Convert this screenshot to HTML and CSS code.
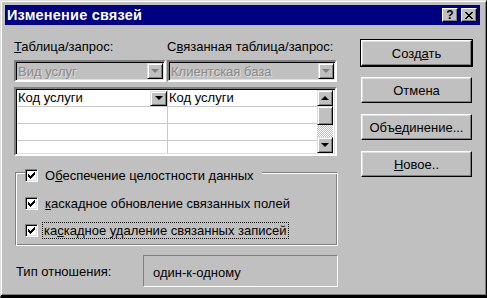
FILE: index.html
```html
<!DOCTYPE html>
<html lang="ru">
<head>
<meta charset="utf-8">
<title>Изменение связей</title>
<link rel="stylesheet" href="styles.css">
</head>
<body>
<div class="window">
  <div class="titlebar">
    <span class="title">Изменение связей</span>
    <div class="tbtns">
      <span class="tbtn help">?</span>
      <span class="tbtn close">
        <svg width="8" height="7" viewBox="0 0 8 7"><path d="M0 0h2v1h1v1h2v-1h1v-1h2v1h-1v1h-1v1h-1v1h1v1h1v1h1v1h-2v-1h-1v-1h-2v1h-1v1h-2v-1h1v-1h1v-1h1v-1h-1v-1h-1v-1h-1z" fill="#000"/></svg>
      </span>
    </div>
  </div>
  <div class="content">
    <div class="left">
      <div class="labels">
        <span class="lab lab1"><u>Т</u>аблица/запрос:</span>
        <span class="lab lab2">С<u>в</u>язанная таблица/запрос:</span>
      </div>
      <div class="combos">
        <div class="combo c1"><span class="ctext">Вид услуг</span><span class="arrowbtn dis"><i class="tri"></i></span></div>
        <div class="combo c2"><span class="ctext">Клиентская база</span><span class="arrowbtn dis"><i class="tri"></i></span></div>
      </div>
      <div class="grid">
        <div class="cols">
          <div class="col col1">
            <div class="cell first">Код услуги<span class="cellbtn"><i class="tri"></i></span></div>
            <div class="cell"></div>
            <div class="cell"></div>
            <div class="cell last"></div>
          </div>
          <div class="col col2">
            <div class="cell">Код услуги</div>
            <div class="cell"></div>
            <div class="cell"></div>
            <div class="cell last"></div>
          </div>
        </div>
        <div class="scroll">
          <span class="sbtn"><i class="tri up"></i></span>
          <span class="thumb"></span>
          <span class="track"></span>
          <span class="sbtn"><i class="tri"></i></span>
        </div>
      </div>
      <div class="group">
        <div class="gtitle">
          <span class="chk"><svg width="7" height="7" viewBox="0 0 7 7"><path d="M0 2h1v1h1v1h1v-1h1v-1h1v-1h1v-1h1v3h-1v1h-1v1h-1v1h-1v1h-1v-1h-1v-1h-1z" fill="#000"/></svg></span>
          <span class="ctxt">О<u>б</u>еспечение целостности данных</span>
        </div>
        <div class="crow">
          <span class="chk"><svg width="7" height="7" viewBox="0 0 7 7"><path d="M0 2h1v1h1v1h1v-1h1v-1h1v-1h1v-1h1v3h-1v1h-1v1h-1v1h-1v1h-1v-1h-1v-1h-1z" fill="#000"/></svg></span>
          <span class="ctxt"><u>к</u>аскадное обновление связанных полей</span>
        </div>
        <div class="crow">
          <span class="chk"><svg width="7" height="7" viewBox="0 0 7 7"><path d="M0 2h1v1h1v1h1v-1h1v-1h1v-1h1v-1h1v3h-1v1h-1v1h-1v1h-1v1h-1v-1h-1v-1h-1z" fill="#000"/></svg></span>
          <span class="ctxt focus">ка<u>с</u>кадное удаление связанных записей</span>
        </div>
      </div>
      <div class="rel">
        <span class="rlab">Тип отношения:</span>
        <span class="rbox">один-к-одному</span>
      </div>
    </div>
    <div class="right">
      <button class="btn def">Созд<u>а</u>ть</button>
      <button class="btn">Отмена</button>
      <button class="btn">Объ<u>е</u>динение...</button>
      <button class="btn"><u>Н</u>овое..</button>
    </div>
  </div>
</div>
</body>
</html>
```
FILE: styles.css
```css
html, body {
  margin: 0;
  padding: 0;
  background: #c0c0c0;
}
.window {
  width: 487px;
  height: 298px;
  box-sizing: border-box;
  background: #c0c0c0;
  border-style: solid;
  border-width: 1px 1px 3px 1px;
  border-color: #dfdfdf #000 #000 #dfdfdf;
  box-shadow: inset 1px 1px #fff, inset -1px -1px #808080;
  padding: 4px 6px 0 4px;
  font-family: "Liberation Sans", Arial, sans-serif;
  font-size: 13px;
  color: #000;
  display: flex;
  flex-direction: column;
}
.titlebar {
  height: 20px;
  background: #000080;
  display: flex;
  align-items: center;
  justify-content: space-between;
  padding-left: 2px;
}
.title {
  color: #fff;
  font-weight: bold;
  font-size: 14.5px;
  letter-spacing: 0.2px;
}
.tbtns {
  display: flex;
  gap: 3px;
  padding-right: 3px;
}
.tbtn {
  width: 16px;
  height: 14px;
  box-sizing: border-box;
  background: #c0c0c0;
  border: 1px solid;
  border-color: #fff #000 #000 #fff;
  box-shadow: inset -1px -1px #808080;
  display: flex;
  align-items: center;
  justify-content: center;
  font-weight: bold;
  font-size: 12px;
  line-height: 12px;
}
.content {
  display: flex;
  padding-left: 9px;
  gap: 22px;
}
.left {
  width: 325px;
  display: flex;
  flex-direction: column;
}
.labels {
  display: flex;
  margin-top: 14px;
  height: 15px;
  line-height: 15px;
}
.lab1 { width: 153px; }
.combos {
  display: flex;
  margin-top: 6px;
  gap: 1px;
}
.combo {
  height: 22px;
  box-sizing: border-box;
  border: 2px solid;
  border-color: #808080 #fff #fff #808080;
  box-shadow: inset 1px 1px #000, inset -1px -1px #dfdfdf;
  background: #c0c0c0;
  display: flex;
  align-items: center;
  justify-content: space-between;
  padding: 0 1px 0 2px;
}
.c1 { width: 152px; }
.c2 { width: 170px; }
.ctext {
  color: #8a8a8a;
  text-shadow: 1px 1px #dfdfdf;
}
.arrowbtn {
  width: 16px;
  height: 16px;
  box-sizing: border-box;
  border: 1px solid;
  border-color: #dfdfdf #000 #000 #dfdfdf;
  box-shadow: inset 1px 1px #fff, inset -1px -1px #808080;
  background: #c0c0c0;
  display: flex;
  align-items: center;
  justify-content: center;
}
.tri {
  width: 0;
  height: 0;
  border-left: 4px solid transparent;
  border-right: 4px solid transparent;
  border-top: 4px solid #000;
}
.tri.up {
  border-top: 0;
  border-bottom: 4px solid #000;
}
.dis .tri {
  border-top-color: #808080;
}
.grid {
  margin-top: 5px;
  width: 323px;
  height: 69px;
  box-sizing: border-box;
  border: 2px solid;
  border-color: #808080 #fff #fff #808080;
  box-shadow: inset 1px 1px #000, inset -1px -1px #dfdfdf;
  background: #fff;
  display: flex;
  padding: 1px 2px 1px 1px;
}
.cols {
  flex: 1;
  display: flex;
}
.col1 {
  width: 150px;
  border-right: 1px solid #c8c8c8;
}
.col2 { flex: 1; }
.cell {
  height: 16px;
  border-bottom: 1px solid #c8c8c8;
  line-height: 16px;
  padding-left: 1px;
  display: flex;
  justify-content: space-between;
  align-items: center;
}
.cell.last { border-bottom: 0; }
.cellbtn {
  width: 17px;
  height: 15px;
  box-sizing: border-box;
  border: 1px solid;
  border-color: #dfdfdf #000 #000 #dfdfdf;
  box-shadow: inset 1px 1px #fff, inset -1px -1px #808080;
  background: #c0c0c0;
  display: flex;
  align-items: center;
  justify-content: center;
}
.scroll {
  width: 16px;
  display: flex;
  flex-direction: column;
}
.sbtn, .thumb {
  height: 16px;
  box-sizing: border-box;
  border: 1px solid;
  border-color: #dfdfdf #000 #000 #dfdfdf;
  box-shadow: inset 1px 1px #fff, inset -1px -1px #808080;
  background: #c0c0c0;
  display: flex;
  align-items: center;
  justify-content: center;
}
.thumb { height: 19px; }
.track {
  flex: 1;
  background: repeating-conic-gradient(#c0c0c0 0 25%, #fff 0 50%) 0 0 / 2px 2px;
}
.group {
  margin-top: 12px;
  margin-left: 1px;
  width: 323px;
  height: 74px;
  box-sizing: border-box;
  border: 1px solid;
  border-color: #808080 #fff #fff #808080;
  box-shadow: inset 1px 1px #fff, inset -1px -1px #808080;
  margin-top: 16px;
  padding-left: 9px;
  display: flex;
  flex-direction: column;
}
.gtitle {
  display: flex;
  align-items: center;
  margin-top: -5px;
  background: #c0c0c0;
  align-self: flex-start;
  padding-right: 8px;
  height: 15px;
}
.crow {
  display: flex;
  align-items: center;
  height: 15px;
  margin-top: 13px;
}
.crow + .crow { margin-top: 12px; }
.chk {
  width: 13px;
  height: 13px;
  box-sizing: border-box;
  border: 1px solid;
  border-color: #808080 #fff #fff #808080;
  box-shadow: inset 1px 1px #000, inset -1px -1px #dfdfdf;
  background: #fff;
  display: flex;
  align-items: center;
  justify-content: center;
  margin-right: 7px;
  flex: none;
}
.ctxt {
  line-height: 15px;
}
.focus {
  outline: 1px dotted #000;
  outline-offset: 0;
  padding: 0 1px;
  margin-left: -2px;
}
.rel {
  display: flex;
  align-items: center;
  margin-top: 9px;
}
.rlab {
  width: 127px;
  padding-left: 2px;
}
.rbox {
  width: 195px;
  height: 32px;
  box-sizing: border-box;
  border: 1px solid;
  border-color: #808080 #fff #fff #808080;
  display: flex;
  align-items: center;
  padding: 2px 0 0 9px;
}
.right {
  display: flex;
  flex-direction: column;
  gap: 11px;
  padding-top: 15px;
}
.btn {
  width: 111px;
  height: 26px;
  box-sizing: border-box;
  font: inherit;
  color: #000;
  background: #c0c0c0;
  border: 1px solid;
  border-color: #fff #000 #000 #fff;
  box-shadow: inset -1px -1px #808080, inset 1px 1px #dfdfdf;
  padding: 0;
}
.btn.def {
  outline: 1px solid #000;
}
```
